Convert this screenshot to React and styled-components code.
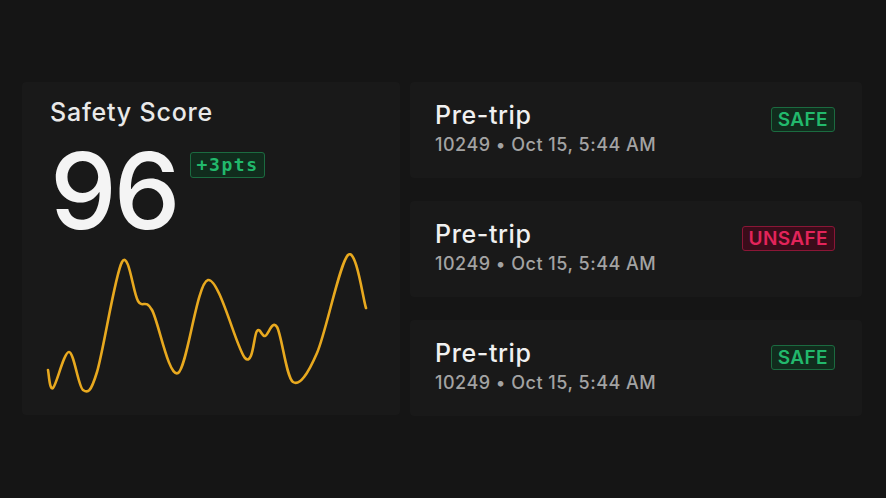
import React from "react";
import styled, { createGlobalStyle } from "styled-components";

const GlobalStyle = createGlobalStyle`
  html, body {
    margin: 0;
    padding: 0;
    background: #151515;
  }
  body {
    font-family: Inter, "Noto Sans", sans-serif;
    color: #ececec;
  }
`;

const Page = styled.main`
  display: grid;
  grid-template-columns: 378px 452px;
  column-gap: 10px;
  padding: 82px 0 0 22px;
  width: 886px;
  height: 498px;
  box-sizing: border-box;
`;

const ScoreCard = styled.section`
  background: #191919;
  border-radius: 4px;
  padding: 15px 28px 0 28px;
  height: 333px;
  box-sizing: border-box;
  display: flex;
  flex-direction: column;
`;

const CardTitle = styled.h2`
  margin: 0;
  font-size: 25px;
  line-height: 30px;
  font-weight: 500;
  letter-spacing: 0.8px;
  color: #e9e9e9;
`;

const ScoreRow = styled.div`
  display: flex;
  align-items: flex-start;
  gap: 12px;
`;

const ScoreValue = styled.span`
  font-size: 106px;
  line-height: 128px;
  font-weight: 500;
  letter-spacing: -3px;
  color: #f4f4f4;
`;

const Delta = styled.span`
  margin-top: 25px;
  padding: 1px 5px 1px 6px;
  font-family: "DejaVu Sans Mono", "Liberation Mono", monospace;
  font-size: 18px;
  line-height: 22px;
  font-weight: 600;
  letter-spacing: 1.6px;
  color: #22b96c;
  background: #112c1d;
  border: 1.5px solid #1b6b40;
  border-radius: 3px;
`;

const Chart = styled.svg`
  display: block;
  overflow: visible;
`;

const TripList = styled.section`
  display: flex;
  flex-direction: column;
  gap: 23px;
`;

const TripCard = styled.article`
  background: #191919;
  border-radius: 4px;
  height: 96px;
  box-sizing: border-box;
  padding: 19px 27px 0 25px;
  display: flex;
  justify-content: space-between;
  align-items: flex-start;
`;

const TripInfo = styled.div`
  display: flex;
  flex-direction: column;
  gap: 6px;
`;

const TripTitle = styled.h3`
  margin: 0;
  font-size: 25px;
  line-height: 28px;
  font-weight: 500;
  letter-spacing: 0.6px;
  color: #f0f0f0;
`;

const TripMeta = styled.p`
  margin: 0;
  font-size: 18px;
  line-height: 20px;
  font-weight: 500;
  letter-spacing: 0.5px;
  color: #a3a3a3;
`;

const Status = styled.span`
  margin-top: 6px;
  padding: 1px 6px;
  font-size: 19px;
  line-height: 21px;
  font-weight: 600;
  letter-spacing: 0.4px;
  border-radius: 3px;
  border: 1.5px solid ${(p) => (p.$safe ? "#1b6b40" : "#8a1636")};
  background: ${(p) => (p.$safe ? "#112c1d" : "#3a0c1a")};
  color: ${(p) => (p.$safe ? "#22b96c" : "#e3245a")};
`;

const points = [
  [48, 370], [53, 388], [69, 352], [83, 390], [97, 372], [122, 262],
  [138, 301], [152, 310], [178, 373], [208, 280], [245, 358], [257, 331],
  [265, 336], [277, 327], [293, 382], [317, 353], [348, 255], [366, 308],
];

// catmull-rom -> cubic bezier, coords relative to chart origin (50, 255)
const toPath = (pts) => {
  const p = pts.map(([x, y]) => [x - 50, y - 255]);
  let d = `M${p[0][0]},${p[0][1]}`;
  for (let i = 0; i < p.length - 1; i++) {
    const p0 = p[i - 1] || p[i];
    const p1 = p[i];
    const p2 = p[i + 1];
    const p3 = p[i + 2] || p2;
    const c1 = [p1[0] + (p2[0] - p0[0]) / 6, p1[1] + (p2[1] - p0[1]) / 6];
    const c2 = [p2[0] - (p3[0] - p1[0]) / 6, p2[1] - (p3[1] - p1[1]) / 6];
    d += ` C${c1[0].toFixed(1)},${c1[1].toFixed(1)} ${c2[0].toFixed(1)},${c2[1].toFixed(1)} ${p2[0]},${p2[1]}`;
  }
  return d;
};

const trips = [
  { id: 1, safe: true },
  { id: 2, safe: false },
  { id: 3, safe: true },
];

const App = () => {
  return (
    <>
      <GlobalStyle />
      <Page>
        <ScoreCard>
          <CardTitle>Safety Score</CardTitle>
          <ScoreRow>
            <ScoreValue>96</ScoreValue>
            <Delta>+3pts</Delta>
          </ScoreRow>
          <Chart width="322" height="140" viewBox="0 0 322 140">
            <path
              d={toPath(points)}
              fill="none"
              stroke="#e8a91f"
              strokeWidth="2.6"
              strokeLinecap="round"
              strokeLinejoin="round"
            />
          </Chart>
        </ScoreCard>

        <TripList>
          {trips.map((trip) => (
            <TripCard key={trip.id}>
              <TripInfo>
                <TripTitle>Pre-trip</TripTitle>
                <TripMeta>10249 • Oct 15, 5:44 AM</TripMeta>
              </TripInfo>
              <Status $safe={trip.safe}>{trip.safe ? "SAFE" : "UNSAFE"}</Status>
            </TripCard>
          ))}
        </TripList>
      </Page>
    </>
  );
};

export default App;
